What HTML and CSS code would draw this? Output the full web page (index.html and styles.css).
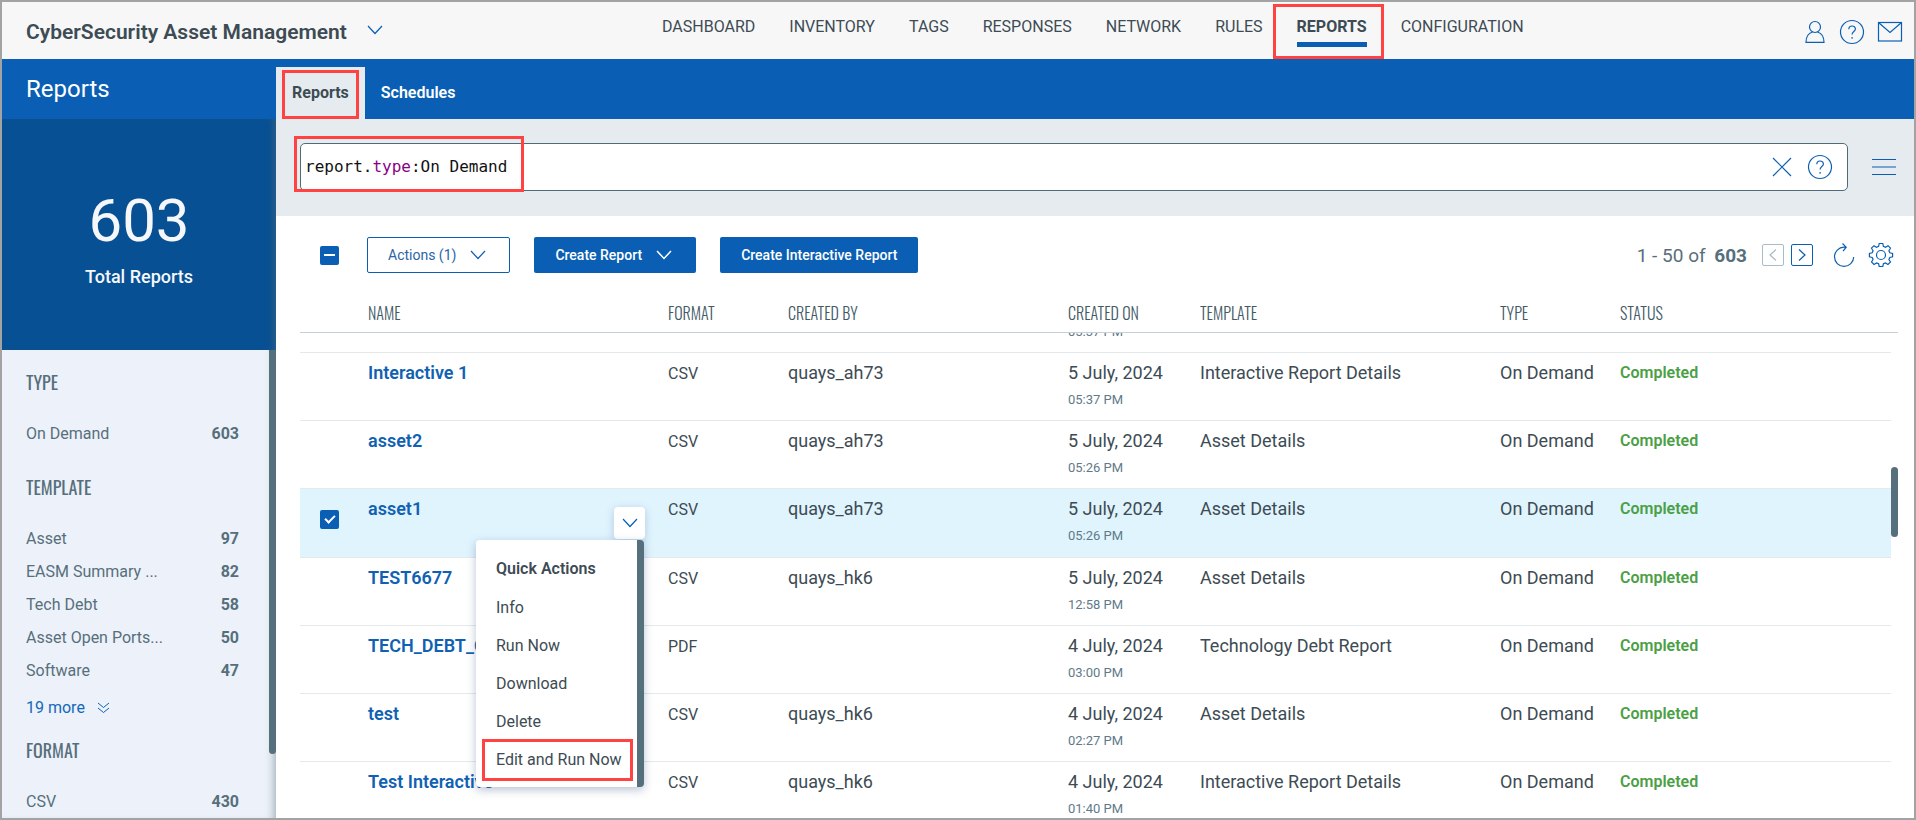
FILE: index.html
```html
<!DOCTYPE html>
<html lang="en">
<head>
    <meta charset="UTF-8">
    <meta name="viewport" content="width=device-width, initial-scale=1.0">
    <title>CyberSecurity Asset Management - Reports</title>
    <link rel="stylesheet" href="styles.css">
</head>
<body>
    <!-- Top bar -->
    <header class="topbar">
        <button class="app-switch">
            CyberSecurity Asset Management
            <svg class="chevron" width="16" height="10" viewBox="0 0 16 10"><path d="M1 1l7 7.500 7-7.500"/></svg>
        </button>
        <nav class="main-nav">
            <a href="#">DASHBOARD</a>
            <a href="#">INVENTORY</a>
            <a href="#">TAGS</a>
            <a href="#">RESPONSES</a>
            <a href="#">NETWORK</a>
            <a href="#">RULES</a>
            <a href="#" class="active">REPORTS</a>
            <a href="#">CONFIGURATION</a>
        </nav>
        <div class="user-tools">
            <button class="icon-button" aria-label="Account">
                <svg width="22" height="24" viewBox="0 0 22 24"><circle cx="10" cy="7" r="5.500"/><path d="M7.500 12C3.500 13.200 1 16.500 1 22.300h18C19 16.500 16.500 13.200 12.500 12"/></svg>
            </button>
            <button class="icon-button" aria-label="Help">
                <svg width="26" height="26" viewBox="0 0 26 26"><circle cx="13" cy="13" r="11.500"/><path d="M9.800 10.200c0-4.200 6.600-4.200 6.600-.3 0 2.700-3.300 2.600-3.300 5.600M13.100 18v1.700"/></svg>
            </button>
            <button class="icon-button" aria-label="Messages">
                <svg width="26" height="22" viewBox="0 0 26 22"><rect x="1.500" y="1.500" width="23" height="18.500"/><path d="M1.500 1.500L13 11.500l11.500-10"/></svg>
            </button>
        </div>
    </header>

    <div class="layout">
        <!-- Sidebar -->
        <aside class="sidebar">
            <h1 class="page-title">Reports</h1>
            <div class="total">
                <div class="total-value">603</div>
                <div class="total-label">Total Reports</div>
            </div>
            <div class="facets">
                <section class="facet">
                    <h2>TYPE</h2>
                    <ul>
                        <li><span>On Demand</span><b>603</b></li>
                    </ul>
                </section>
                <section class="facet">
                    <h2>TEMPLATE</h2>
                    <ul>
                        <li><span>Asset</span><b>97</b></li>
                        <li><span>EASM Summary ...</span><b>82</b></li>
                        <li><span>Tech Debt</span><b>58</b></li>
                        <li><span>Asset Open Ports...</span><b>50</b></li>
                        <li><span>Software</span><b>47</b></li>
                    </ul>
                    <a href="#" class="more">
                        19 more
                        <svg width="13" height="12" viewBox="0 0 13 12"><path d="M1 1l5.500 4.500L12 1M1 6l5.500 4.500L12 6"/></svg>
                    </a>
                </section>
                <section class="facet">
                    <h2>FORMAT</h2>
                    <ul>
                        <li><span>CSV</span><b>430</b></li>
                    </ul>
                </section>
                <div class="side-scroll"></div>
            </div>
        </aside>

        <main class="main">
            <div class="tabs">
                <a href="#" class="tab active">Reports</a>
                <a href="#" class="tab">Schedules</a>
            </div>

            <!-- Search -->
            <div class="search-bar">
                <div class="search-box">
                    <div class="query">
                        <div class="query-text" aria-hidden="true">report.<span>type</span>:On Demand</div>
                        <input type="text" aria-label="Search reports" value="report.type:On Demand" spellcheck="false">
                    </div>
                    <button class="icon-button" aria-label="Clear">
                        <svg width="20" height="20" viewBox="0 0 20 20"><path d="M1 1l18 18M19 1L1 19"/></svg>
                    </button>
                    <button class="icon-button" aria-label="Search help">
                        <svg width="26" height="26" viewBox="0 0 26 26"><circle cx="13" cy="13" r="11.500"/><path d="M9.800 10.200c0-4.200 6.600-4.200 6.600-.3 0 2.700-3.300 2.600-3.300 5.600M13.100 18v1.700"/></svg>
                    </button>
                </div>
                <button class="icon-button" aria-label="Menu">
                    <svg width="24" height="18" viewBox="0 0 24 18"><path d="M0 1.500h24M0 9h24M0 16.500h24"/></svg>
                </button>
            </div>

            <!-- Toolbar -->
            <div class="toolbar">
                <input type="checkbox" class="check partial" aria-label="Select all">
                <button class="btn outline">
                    Actions (1)
                    <svg class="chevron" width="16" height="10" viewBox="0 0 16 10"><path d="M1 1l7 7.500 7-7.500"/></svg>
                </button>
                <button class="btn">
                    Create Report
                    <svg class="chevron" width="16" height="10" viewBox="0 0 16 10"><path d="M1 1l7 7.500 7-7.500"/></svg>
                </button>
                <button class="btn">Create Interactive Report</button>
                <div class="pager">
                    <span class="range">1 - 50 of <b>603</b></span>
                    <button class="page-button" aria-label="Previous page" disabled>
                        <svg width="8" height="12" viewBox="0 0 8 12"><path d="M7 .5L1 6l6 5.500"/></svg>
                    </button>
                    <button class="page-button" aria-label="Next page">
                        <svg width="8" height="12" viewBox="0 0 8 12"><path d="M1 .5L7 6l-6 5.500"/></svg>
                    </button>
                    <button class="icon-button refresh" aria-label="Refresh">
                        <svg width="24" height="26" viewBox="0 0 24 26"><path d="M14 5.200H12A9.600 9.600 0 1 0 21.700 15M10.500 1.500l3.700 3.700-3.200 4"/></svg>
                    </button>
                    <button class="icon-button" aria-label="Settings">
                        <svg width="26" height="26" viewBox="0 0 26 26"><circle cx="13" cy="13" r="4.500"/><path d="M11.200 1.500h3.600l.6 2.900 2.100.9 2.500-1.600 2.500 2.500-1.600 2.500.9 2.100 2.800.6v3.400l-2.800.6-.9 2.100 1.600 2.500-2.500 2.500-2.500-1.600-2.100.9-.6 2.700h-3.600l-.6-2.700-2.100-.9L6 22.500 3.500 20l1.600-2.500-.9-2.100-2.800-.6v-3.400l2.800-.6.9-2.100-1.600-2.500L6 3.700l2.500 1.600 2.100-.9z"/></svg>
                    </button>
                </div>
            </div>

            <!-- Report list -->
            <div class="list">
                <table class="reports">
                    <colgroup>
                        <col class="c-check"><col class="c-name"><col class="c-format"><col class="c-by"><col class="c-on"><col class="c-template"><col class="c-type"><col><col class="c-gutter">
                    </colgroup>
                    <thead>
                        <tr>
                            <th></th>
                            <th>NAME</th>
                            <th>FORMAT</th>
                            <th>CREATED BY</th>
                            <th>CREATED ON</th>
                            <th>TEMPLATE</th>
                            <th>TYPE</th>
                            <th>STATUS</th>
                            <th></th>
                        </tr>
                    </thead>
                    <tbody>
                        <tr class="cut">
                            <td></td><td></td><td></td><td></td>
                            <td><div class="cut-cell"><span class="time">05:37 PM</span></div></td>
                            <td></td><td></td><td></td><td></td>
                        </tr>
                        <tr>
                            <td></td>
                            <td><a href="#">Interactive 1</a></td>
                            <td class="format">CSV</td>
                            <td>quays_ah73</td>
                            <td>5 July, 2024<span class="time">05:37 PM</span></td>
                            <td>Interactive Report Details</td>
                            <td>On Demand</td>
                            <td class="status">Completed</td>
                            <td></td>
                        </tr>
                        <tr>
                            <td></td>
                            <td><a href="#">asset2</a></td>
                            <td class="format">CSV</td>
                            <td>quays_ah73</td>
                            <td>5 July, 2024<span class="time">05:26 PM</span></td>
                            <td>Asset Details</td>
                            <td>On Demand</td>
                            <td class="status">Completed</td>
                            <td></td>
                        </tr>
                        <tr class="selected">
                            <td><input type="checkbox" class="check" aria-label="Select asset1" checked></td>
                            <td class="with-menu">
                                <a href="#">asset1</a>
                                <button class="row-menu" aria-label="Quick actions">
                                    <svg class="chevron" width="16" height="10" viewBox="0 0 16 10"><path d="M1 1l7 7.500 7-7.500"/></svg>
                                </button>
                                <div class="quick-menu">
                                    <h3>Quick Actions</h3>
                                    <button>Info</button>
                                    <button>Run Now</button>
                                    <button>Download</button>
                                    <button>Delete</button>
                                    <button class="marked">Edit and Run Now</button>
                                </div>
                            </td>
                            <td class="format">CSV</td>
                            <td>quays_ah73</td>
                            <td>5 July, 2024<span class="time">05:26 PM</span></td>
                            <td>Asset Details</td>
                            <td>On Demand</td>
                            <td class="status">Completed</td>
                            <td></td>
                        </tr>
                        <tr>
                            <td></td>
                            <td><a href="#">TEST6677</a></td>
                            <td class="format">CSV</td>
                            <td>quays_hk6</td>
                            <td>5 July, 2024<span class="time">12:58 PM</span></td>
                            <td>Asset Details</td>
                            <td>On Demand</td>
                            <td class="status">Completed</td>
                            <td></td>
                        </tr>
                        <tr>
                            <td></td>
                            <td><a href="#">TECH_DEBT_C</a></td>
                            <td class="format">PDF</td>
                            <td></td>
                            <td>4 July, 2024<span class="time">03:00 PM</span></td>
                            <td>Technology Debt Report</td>
                            <td>On Demand</td>
                            <td class="status">Completed</td>
                            <td></td>
                        </tr>
                        <tr>
                            <td></td>
                            <td><a href="#">test</a></td>
                            <td class="format">CSV</td>
                            <td>quays_hk6</td>
                            <td>4 July, 2024<span class="time">02:27 PM</span></td>
                            <td>Asset Details</td>
                            <td>On Demand</td>
                            <td class="status">Completed</td>
                            <td></td>
                        </tr>
                        <tr>
                            <td></td>
                            <td><a href="#">Test Interactive</a></td>
                            <td class="format">CSV</td>
                            <td>quays_hk6</td>
                            <td>4 July, 2024<span class="time">01:40 PM</span></td>
                            <td>Interactive Report Details</td>
                            <td>On Demand</td>
                            <td class="status">Completed</td>
                            <td></td>
                        </tr>
                    </tbody>
                </table>
                <div class="list-scroll"></div>
            </div>
        </main>
    </div>
</body>
</html>
```

FILE: styles.css
```css
* {
    margin: 0;
    padding: 0;
    box-sizing: border-box;
}

body {
    height: 100vh;
    overflow: hidden;
    border: 2px solid #a3a3a3;
    display: flex;
    flex-direction: column;
    font-family: Roboto, "Liberation Sans", Arial, sans-serif;
    font-size: 16px;
    color: #3d4b54;
    background: white;
}

a {
    text-decoration: none;
    color: inherit;
}

button {
    font: inherit;
    color: inherit;
    border: none;
    background: none;
    cursor: pointer;
}

svg {
    display: block;
    fill: none;
    stroke: #0a5fb4;
    stroke-width: 1.2;
}

.icon-button {
    display: flex;
    align-items: center;
    justify-content: center;
}

/* top bar */
.topbar {
    height: 57px;
    flex-shrink: 0;
    background: #f7f7f7;
    display: grid;
    grid-template-columns: 660px 1fr auto;
}

.app-switch {
    display: flex;
    align-items: center;
    gap: 20px;
    padding-left: 24px;
    padding-top: 2px;
    font-size: 21px;
    font-weight: 600;
}

.app-switch svg {
    margin-bottom: 4px;
}

.main-nav {
    display: flex;
    gap: 34px;
}

.main-nav a {
    position: relative;
    height: 45px;
    padding-top: 15px;
    line-height: 20px;
    white-space: nowrap;
}

.main-nav .active {
    font-weight: 700;
    border-bottom: 5px solid #0a5fb4;
}

.main-nav .active::after,
.tab.active::after,
.search-box::after,
.quick-menu .marked::after {
    content: "";
    position: absolute;
    border: 3px solid #ff4343;
    pointer-events: none;
}

.main-nav .active::after {
    inset: 2px -17px -17px -24px;
}

.user-tools {
    display: flex;
    align-items: center;
    gap: 12px;
    padding-right: 11px;
    padding-top: 2px;
}

/* sidebar */
.layout {
    flex: 1;
    min-height: 0;
    display: flex;
}

.sidebar {
    width: 274px;
    flex-shrink: 0;
    display: flex;
    flex-direction: column;
    background: #edf2fa;
    box-shadow: inset -8px 0 8px -6px rgba(80, 105, 120, 0.5);
}

.page-title {
    height: 60px;
    flex-shrink: 0;
    padding-left: 24px;
    line-height: 60px;
    font-size: 24px;
    font-weight: 400;
    color: white;
    background: #0a5fb4;
}

.total {
    height: 231px;
    flex-shrink: 0;
    padding-top: 66px;
    text-align: center;
    color: #f5f7fa;
    background: #075094;
    box-shadow: inset -6px 0 6px -3px rgba(80, 105, 120, 0.5);
}

.total-value {
    font-size: 60px;
    line-height: 72px;
}

.total-label {
    margin-top: 8px;
    font-size: 18px;
    font-weight: 500;
    line-height: 24px;
}

.facets {
    position: relative;
    flex: 1;
    min-height: 0;
    padding: 20px 37px 0 24px;
    color: #576f7b;
}

.side-scroll {
    position: absolute;
    top: 0;
    right: 0;
    width: 7px;
    height: 404px;
    border-radius: 0 0 4px 4px;
    background: #566f7c;
}

.facet {
    margin-bottom: 22px;
}

.facet h2 {
    margin-bottom: 23px;
    font-family: Oswald, "Roboto Condensed", "Liberation Sans Narrow", Roboto, sans-serif;
    font-size: 18px;
    font-weight: 400;
    line-height: 24px;
}

.facet ul {
    list-style: none;
    padding-bottom: 3px;
}

.facet li {
    display: flex;
    justify-content: space-between;
    line-height: 33px;
}

.more {
    display: flex;
    align-items: center;
    gap: 12px;
    margin-top: 10px;
    line-height: 16px;
    color: #1468b8;
}

.more svg {
    stroke-width: 1;
}

/* tabs */
.main {
    flex: 1;
    min-width: 0;
    display: flex;
    flex-direction: column;
}

.tabs {
    height: 60px;
    flex-shrink: 0;
    display: flex;
    align-items: flex-end;
    background: #0a5fb4;
}

.tab {
    position: relative;
    height: 52px;
    padding: 0 16px;
    line-height: 52px;
    font-weight: 600;
    color: white;
}

.tab.active {
    font-weight: 700;
    color: #3d4b54;
    background: #e5ebee;
}

.tab.active::after {
    inset: 3px 6px 0;
}

/* search */
.search-bar {
    height: 97px;
    flex-shrink: 0;
    display: flex;
    align-items: center;
    gap: 24px;
    padding: 0 18px 2px 24px;
    background: #e5ebee;
}

.search-box {
    position: relative;
    flex: 1;
    height: 48px;
    display: flex;
    align-items: center;
    gap: 15px;
    padding: 0 14px 0 4px;
    border: 1px solid #4f6b7a;
    border-radius: 5px;
    background: white;
}

.search-box::after {
    left: -7px;
    top: -8px;
    width: 224px;
    height: 50px;
}

.query {
    flex: 1;
    display: grid;
    font-family: "DejaVu Sans Mono", "Liberation Mono", monospace;
    line-height: 24px;
    color: #111;
}

.query-text,
.query input {
    grid-area: 1 / 1;
    font: inherit;
    white-space: pre;
}

.query-text span {
    color: #808;
}

.query input {
    border: none;
    outline: none;
    background: none;
    color: transparent;
    caret-color: #111;
}

/* toolbar */
.toolbar {
    flex-shrink: 0;
    display: flex;
    align-items: center;
    gap: 24px;
    padding: 21px 20px 0 44px;
    color: #576f7b;
}

.check {
    appearance: none;
    display: flex;
    align-items: center;
    justify-content: center;
    width: 19px;
    height: 19px;
    border-radius: 2px;
    background: #0a5fb4;
}

.check::after {
    content: "";
    width: 4px;
    height: 8px;
    margin-bottom: 3px;
    border: solid white;
    border-width: 0 2px 2px 0;
    transform: rotate(45deg);
}

.check.partial {
    margin-right: 4px;
}

.check.partial::after {
    width: 11px;
    height: 0;
    margin: 0;
    border-width: 2px 0 0;
    transform: none;
}

.btn {
    height: 36px;
    display: flex;
    align-items: center;
    gap: 14px;
    padding: 0 21px;
    border-radius: 2px;
    font-size: 14px;
    font-weight: 500;
    color: white;
    background: #0a5fb4;
}

.btn svg {
    margin-right: 3px;
    stroke: white;
    stroke-width: 1.5;
}

.btn.outline {
    border: 1px solid #0a5fb4;
    padding: 0 20px;
    font-weight: 400;
    color: #2a65a8;
    background: white;
}

.btn.outline svg {
    stroke: #0a5fb4;
    stroke-width: 1.2;
}

.pager {
    margin-left: auto;
    display: flex;
    align-items: center;
    gap: 7px;
}

.range {
    margin-right: 8px;
    font-size: 19px;
}

.range b {
    margin-left: 4px;
}

.page-button {
    width: 22px;
    height: 22px;
    display: flex;
    align-items: center;
    justify-content: center;
    border: 1px solid #0a5fb4;
    border-radius: 2px;
}

.page-button:disabled {
    border-color: #a9bcc5;
}

.page-button:disabled svg {
    stroke: #a9bcc5;
}

.refresh {
    margin: 0 5px 0 12px;
}

/* list */
.list {
    position: relative;
    margin: 20px 16px 0 24px;
}

.list-scroll {
    position: absolute;
    top: 174px;
    right: 0;
    width: 7px;
    height: 70px;
    border-radius: 4px;
    background: #566f7c;
}

.reports {
    width: 100%;
    table-layout: fixed;
    border-collapse: separate;
    border-spacing: 0;
}

.c-check { width: 68px; }
.c-name { width: 300px; }
.c-format { width: 120px; }
.c-by { width: 280px; }
.c-on { width: 132px; }
.c-template { width: 300px; }
.c-type { width: 120px; }
.c-gutter { width: 7px; }

.reports th {
    height: 40px;
    border-bottom: 1px solid #c6d0d6;
    font-family: Oswald, "Roboto Condensed", "Liberation Sans Narrow", Roboto, sans-serif;
    font-size: 16px;
    font-weight: 300;
    line-height: 24px;
    text-align: left;
    color: #425a66;
}

.reports td {
    height: 68px;
    padding-top: 8px;
    vertical-align: top;
    border-bottom: 1px solid #e4e9eb;
    font-size: 18px;
    line-height: 24px;
    white-space: nowrap;
}

.reports td:last-child {
    border: none;
}

.reports td a {
    font-weight: 600;
    color: #1161b3;
}

.reports .cut td {
    height: 20px;
    padding: 0;
}

.cut-cell {
    height: 19px;
    overflow: hidden;
    display: flex;
    align-items: flex-end;
    padding-bottom: 8px;
}

.time {
    display: block;
    margin-top: 3px;
    font-size: 13px;
    line-height: 24px;
    color: #5f7a88;
}

.reports .format {
    padding-top: 9px;
    font-size: 16px;
}

.reports .status {
    font-size: 16px;
    font-weight: 600;
    color: #4ba045;
}

.reports .selected td {
    height: 69px;
}

.selected td:not(:last-child) {
    background: #e0f4fe;
}

.selected .check {
    margin: 13px 0 0 20px;
}

/* quick actions */
.with-menu {
    position: relative;
}

.row-menu {
    position: absolute;
    top: 18px;
    right: 23px;
    width: 31px;
    height: 32px;
    display: flex;
    align-items: center;
    justify-content: center;
    border-radius: 4px;
    background: white;
    box-shadow: 0 2px 8px rgba(30, 80, 140, 0.25);
}

.quick-menu {
    position: absolute;
    z-index: 2;
    top: 51px;
    right: 24px;
    width: 168px;
    height: 247px;
    padding-top: 9px;
    border-right: 7px solid #566f7c;
    border-radius: 4px;
    background: white;
    box-shadow: 0 3px 10px rgba(30, 60, 110, 0.3);
}

.quick-menu h3,
.quick-menu button {
    position: relative;
    display: block;
    width: 100%;
    padding-left: 20px;
    font-size: 16px;
    font-weight: 400;
    line-height: 38px;
    text-align: left;
}

.quick-menu h3 {
    font-weight: 600;
    line-height: 40px;
}

.quick-menu .marked::after {
    inset: -2px 4px -2px 6px;
}
```
